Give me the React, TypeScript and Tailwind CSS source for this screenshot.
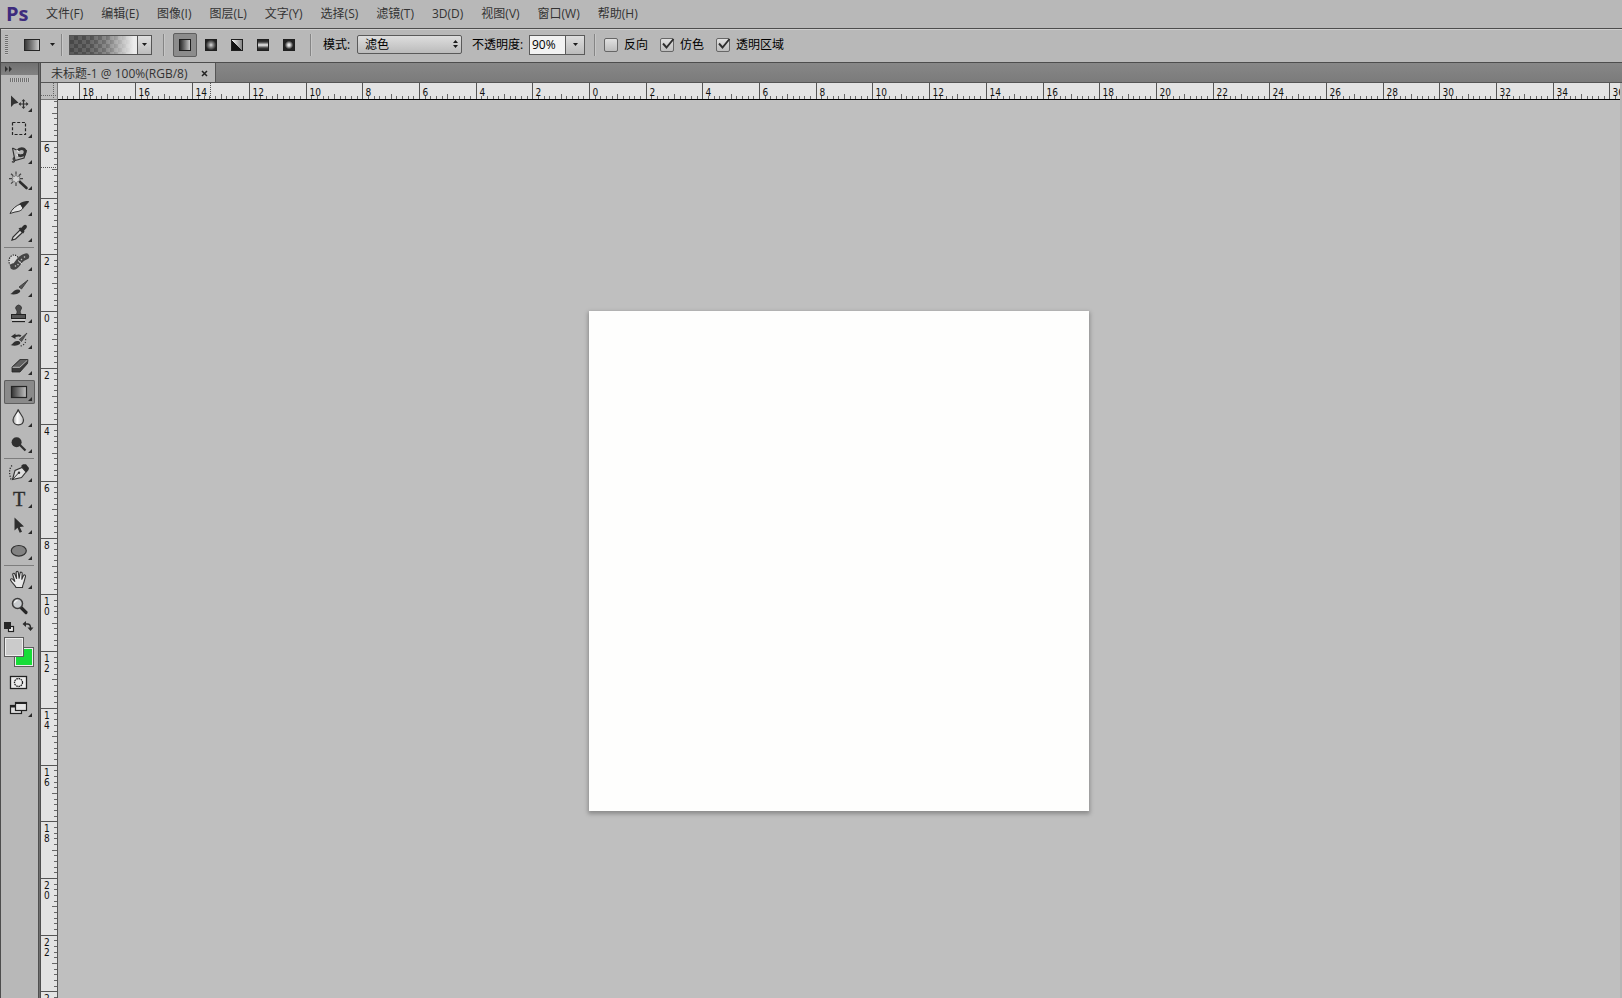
import React from "react";

const MENUS = [
  "文件(F)",
  "编辑(E)",
  "图像(I)",
  "图层(L)",
  "文字(Y)",
  "选择(S)",
  "滤镜(T)",
  "3D(D)",
  "视图(V)",
  "窗口(W)",
  "帮助(H)",
];

const UI_FONT = "font-['Open_Sans','Noto_Sans_CJK_SC',sans-serif]";
const DARK = "#333333";
const UNIT = 56.69;

/* ---------- tool icons, drawn on a 31x24 button ---------- */

const Corner = () => <path d="M28 17v4h-4z" fill="#2a2a2a" />;

const ICONS: Record<string, React.ReactNode> = {
  move: (
    <>
      <path d="M7 4.5V16l3-3 4.5-1.2z" fill={DARK} />
      <path d="M15.5 13h8M19.5 9v8" stroke={DARK} strokeWidth="1.2" />
      <path d="M19.5 8l1.9 2.3h-3.8zM19.5 18l1.9-2.3h-3.8zM14.5 13l2.3-1.9v3.8zM24.5 13l-2.3-1.9v3.8z" fill={DARK} />
    </>
  ),
  marquee: (
    <rect x="8.5" y="5.5" width="13" height="12" fill="none" stroke="#222" strokeWidth="1.2" strokeDasharray="3 1.7" />
  ),
  lasso: (
    <>
      <path d="M8.5 5l2.5 12.500L20 15l2.500-8" fill="none" stroke={DARK} strokeWidth="1.2" />
      <path d="M8.5 5l5 2.500M11 14.500c-2 0-2.500 1.500-1 3s-1 2-2 1" fill="none" stroke={DARK} strokeWidth="1.2" />
      <path d="M13.500 12l3 .8 3-.8c2-.9 2.500-5.500-.5-6.200-3-.6-4.500.7-5.500 2" fill="none" stroke={DARK} strokeWidth="2.800" />
      <path d="M12.500 7l2.500 2M12.800 11l1 2.500" stroke="#e5e5e5" strokeWidth="1.200" />
    </>
  ),
  wand: (
    <>
      <path d="M12 2.500v3M12 14v3M5 9.700h3M7 4.800l2.200 2M17 4.800l-2.200 2M7 14.600l2.200-2M16 9.700h3" stroke="#444" strokeWidth="1.200" />
      <path d="M12 5.500l1.300 2.300 2.600-.6-.6 2.500 1 2.300-2.500.3-1.800 2-1.500-2-2.600-.4 1-2.200-.6-2.500 2.500.4z" fill="#d2d2d2" stroke="#666" strokeWidth=".7" />
      <path d="M16 13l6.500 6" stroke="#2c2c2c" strokeWidth="2.600" strokeLinecap="round" />
    </>
  ),
  slice: (
    <>
      <path d="M6 18.500C8 14 12 10.500 16.500 9l2.500 4c-2 3.500-5.500 3.500-8 4z" fill="#e4e4e4" stroke="#333" strokeWidth="1" />
      <path d="M15.500 8.500c3-2 6-2.500 9.500-2.500l-.5 1.500-5.500 6z" fill="#303030" />
    </>
  ),
  eyedropper: (
    <>
      <path d="M8 19l1-3 7-7 2.500 2.500-7 6.500z" fill="#d8d8d8" stroke="#303030" strokeWidth="1.200" />
      <path d="M14.500 7.500l2-1 .6.500 2.400-2.600c2-1.700 4.500.4 3 2.600L20 9.700l.5.800-1.300 2z" fill="#2c2c2c" />
    </>
  ),
  healing: (
    <>
      <ellipse cx="10" cy="11" rx="5" ry="6" fill="#d5d5d5" stroke="#222" strokeWidth="1.200" strokeDasharray="1.200 1.200" />
      <path d="M9.500 16.500c4 .5 4.500-8 12.500-10" stroke="#454545" strokeWidth="6.400" strokeLinecap="round" fill="none" />
      <path d="M14 10.500l4 3.500" stroke="#ddd" strokeWidth="1" />
      <path d="M15.500 11.500l1 1M17 9l1 1M20 6.500l1 1M11 15.500l1 1M13.500 14l1 1" stroke="#bbb" strokeWidth="1.200" />
    </>
  ),
  brush: (
    <>
      <path d="M24 4l-6.500 9-2.500-2z" fill="#555" stroke="#333" strokeWidth=".8" />
      <path d="M6 18c3-.5 3.500-4.500 7.500-4.500 2.500 0 3.500 1.500 2 3-2 2-6 2.500-9.500 1.500z" fill="#303030" />
    </>
  ),
  stamp: (
    <>
      <path d="M12.500 8a2.900 2.900 0 1 1 4.200 0c-1 1.500-.4 3 .8 4.500H12c1.200-1.500 1.500-3 .5-4.500z" fill="#4a4a4a" stroke="#2b2b2b" strokeWidth=".7" />
      <rect x="7.500" y="12.500" width="14" height="4" fill="#555" stroke="#222" />
      <path d="M8 19.500h13" stroke="#222" strokeWidth="1.300" />
      <path d="M8 18h13" stroke="#eee" strokeWidth="1" />
    </>
  ),
  history: (
    <>
      <path d="M23 5l-5.500 8.500-2.200-2z" fill="#555" stroke="#333" strokeWidth=".7" />
      <path d="M6.500 17c2.500-.5 3-4 6.500-4s4 2 2.500 3.300c-2 1.700-6 1.700-9 .7z" fill="#303030" />
      <path d="M7 8.500l4.500-3V7c3-1 4.500-.6 6 .5l-1.500 1.500c-1.500-.8-2.500-.5-4.500 0V11z" fill="#303030" />
      <path d="M21.500 11c.8 3.500-1.500 6.800-6.500 7.300" stroke="#333" strokeWidth="1.200" strokeDasharray="1.200 1.600" fill="none" />
    </>
  ),
  eraser: (
    <>
      <path d="M8 13l8-7.500h8L23.500 9.500l-7.500 8.500H8z" fill="#3a3a3a" stroke="#252525" strokeWidth=".8" />
      <path d="M8.500 13.200L16.300 6h6.900l-7.200 7.200z" fill="#606060" />
      <path d="M8.500 13.300h7.300l7.500-7" stroke="#c8c8c8" strokeWidth=".9" fill="none" />
    </>
  ),
  gradient: (
    <rect x="7.500" y="6.500" width="15" height="11" fill="url(#tool-gradient)" stroke="#252525" strokeWidth="1.200" />
  ),
  blur: (
    <path d="M14.200 3.500c1 4 5.300 6.500 5.300 10.500 0 3-2.300 4.800-5.200 4.800S9 17 9 14c0-4 4.200-6.500 5.200-10.500z" fill="url(#drop)" stroke="#383838" strokeWidth="1.200" />
  ),
  dodge: (
    <>
      <path d="M15.500 12.500l6 6" stroke="#303030" strokeWidth="2.200" />
      <circle cx="12.600" cy="10.200" r="5" fill="#303030" />
    </>
  ),
  pen: (
    <>
      <path d="M8 4.500c-3 3-3 8-1 14" stroke="#222" strokeWidth="1.200" strokeDasharray="1.200 1.500" fill="none" />
      <path d="M8.500 18.500l2.500-9 7-3 4 4.500-4.500 5.500z" fill="#dedede" stroke="#333" strokeWidth="1.100" />
      <path d="M8.500 18.500l6-6.500" stroke="#333" strokeWidth="1" />
      <circle cx="15" cy="11.800" r="1.200" fill="#333" />
      <path d="M17 5l2-1.800h3L25 7l-.5 2-2 2.500z" fill="#2c2c2c" />
    </>
  ),
  type: (
    <text x="15" y="19" textAnchor="middle" fontSize="20" fill="#2e2e2e" stroke="#2e2e2e" strokeWidth=".4" className="font-['Liberation_Serif',serif]">
      T
    </text>
  ),
  path: <path d="M10.500 4.500v13l3-2.800 2.200 5 2.300-1-2.200-4.800 4.200-.4z" fill="#2e2e2e" />,
  ellipse: <ellipse cx="14.800" cy="11.800" rx="7.500" ry="5.300" fill="#828282" stroke="#303030" strokeWidth="1.200" />,
  hand: (
    <path
      d="M12 19.500c-1-2.500-4-4.500-5.500-7.500 0-1.500 1.700-1.500 2.600-.5l1.700 1.800L8.700 6.500c0-1.600 1.800-1.600 2.200-.3l1.700 4.300-.5-6c.2-1.500 2-1.500 2.200 0l.8 5.800 1-5.300c.5-1.300 2.100-1 2.100.4l-.4 5.900 1.700-3.800c.8-1.200 2.200-.5 2 .8l-1.500 5.700c-.5 2-1.500 3-1.500 5.500z"
      fill="#e8e8e8"
      stroke="#333"
      strokeWidth="1.100"
      strokeLinejoin="round"
    />
  ),
  zoom: (
    <>
      <path d="M17 13.500l5 5" stroke="#262626" strokeWidth="3.200" strokeLinecap="round" />
      <circle cx="13.500" cy="9.500" r="5" fill="#c9cccf" stroke="#3c3c3c" strokeWidth="1.500" />
      <path d="M10.500 9c.3-1.800 1.500-2.600 3-2.700" stroke="#f3f3f3" strokeWidth="1.200" fill="none" />
    </>
  ),
  mask: (
    <>
      <rect x="6.500" y="6.500" width="16" height="12" fill="#eee" stroke="#222" strokeWidth="1.300" />
      <circle cx="14.500" cy="12.500" r="4" fill="#eee" stroke="#222" strokeWidth="1.300" strokeDasharray="1.600 .7" />
    </>
  ),
  screen: (
    <>
      <rect x="6.500" y="9.500" width="11" height="8" fill="#ddd" stroke="#222" strokeWidth="1.200" />
      <path d="M6 10.500h12" stroke="#222" strokeWidth="2" />
      <rect x="11.500" y="6.500" width="11" height="8" fill="#e4e4e4" stroke="#222" strokeWidth="1.200" />
      <path d="M11 7h12" stroke="#222" strokeWidth="2" />
    </>
  ),
};

type Tool = { id: string; label: string; flyout?: boolean; active?: boolean };

const GROUPS: Tool[][] = [
  [
    { id: "move", label: "移动工具", flyout: true },
    { id: "marquee", label: "矩形选框工具", flyout: true },
    { id: "lasso", label: "磁性套索工具", flyout: true },
    { id: "wand", label: "魔棒工具", flyout: true },
    { id: "slice", label: "切片工具", flyout: true },
    { id: "eyedropper", label: "吸管工具", flyout: true },
  ],
  [
    { id: "healing", label: "污点修复画笔工具", flyout: true },
    { id: "brush", label: "画笔工具", flyout: true },
    { id: "stamp", label: "仿制图章工具", flyout: true },
    { id: "history", label: "历史记录画笔工具", flyout: true },
    { id: "eraser", label: "橡皮擦工具", flyout: true },
    { id: "gradient", label: "渐变工具", flyout: true, active: true },
    { id: "blur", label: "模糊工具", flyout: true },
    { id: "dodge", label: "减淡工具", flyout: true },
  ],
  [
    { id: "pen", label: "钢笔工具", flyout: true },
    { id: "type", label: "横排文字工具", flyout: true },
    { id: "path", label: "路径选择工具", flyout: true },
    { id: "ellipse", label: "椭圆工具", flyout: true },
  ],
  [
    { id: "hand", label: "抓手工具", flyout: true },
    { id: "zoom", label: "缩放工具" },
  ],
];

function ToolButton({ tool }: { tool: Tool }) {
  return (
    <button
      type="button"
      aria-label={tool.label}
      className={
        tool.active
          ? "my-px block h-6 w-[31px] rounded-xs bg-[#8a8a8a] shadow-[inset_0_0_0_1px_#5e5e5e]"
          : "my-px block h-6 w-[31px]"
      }
    >
      <svg viewBox="0 0 31 24" className="block h-6 w-[31px]">
        {ICONS[tool.id]}
        {tool.flyout && <Corner />}
      </svg>
    </button>
  );
}

function Toolbar() {
  return (
    <aside className="flex w-[38px] shrink-0 flex-col border-l border-[#4d4d4d] bg-[#b8b8b8]">
      <svg className="absolute h-0 w-0">
        <defs>
          <linearGradient id="tool-gradient">
            <stop offset="0" stopColor="#333" />
            <stop offset="1" stopColor="#c4c4c4" />
          </linearGradient>
          <linearGradient id="drop">
            <stop offset="0" stopColor="#999" />
            <stop offset=".4" stopColor="#fff" />
            <stop offset="1" stopColor="#bbb" />
          </linearGradient>
        </defs>
      </svg>
      <button
        type="button"
        aria-label="展开面板"
        className="flex h-3 w-full items-center bg-linear-to-b from-[#707070] to-[#828282] pl-1"
      >
        <svg viewBox="0 0 8 6" className="h-1.5 w-2">
          <path d="M0 0l3 3-3 3zM4 0l3 3-3 3z" fill="#2e2e2e" />
        </svg>
      </button>
      <div className="mt-[3px] mb-2 ml-[9px] h-1 w-5 bg-[repeating-linear-gradient(90deg,#6f6f6f_0_1px,#c4c4c4_1px_2px)]" />
      <div className="flex flex-col pl-[3px]">
        {GROUPS.map((group, i) => (
          <div key={group[0].id} className="flex flex-col">
            {i > 0 && <hr className="my-px w-[30px] border-t border-[#7d7d7d]" />}
            {group.map((t) => (
              <ToolButton key={t.id} tool={t} />
            ))}
          </div>
        ))}
        <div className="flex h-4 justify-between pr-1">
          <button type="button" aria-label="默认前景色和背景色">
            <svg viewBox="0 0 12 16" className="h-4 w-3">
              <rect x="4.500" y="7.500" width="5" height="5" fill="#eee" stroke="#222" strokeWidth="1.200" />
              <rect x="0" y="3" width="7" height="7" fill="#262626" />
            </svg>
          </button>
          <button type="button" aria-label="切换前景色和背景色">
            <svg viewBox="0 0 12 16" className="h-4 w-3">
              <path d="M3 5h2.500c2.500 0 3 1.500 3 4" stroke="#2b2b2b" strokeWidth="1.500" fill="none" />
              <path d="M4 2v6L.5 5zM5.500 8.500h6L8.500 12z" fill="#2b2b2b" />
            </svg>
          </button>
        </div>
        <div className="relative my-0.5 h-[30px] w-[30px]">
          <button
            type="button"
            aria-label="背景色"
            className="absolute right-0 bottom-0 h-5 w-5 border border-[#5c5c5c] bg-[#17dd38] shadow-[inset_0_0_0_1px_#eeeeee]"
          />
          <button
            type="button"
            aria-label="前景色"
            className="absolute top-0 left-0 h-5 w-5 border border-[#5c5c5c] bg-[#cbcbcb] shadow-[inset_0_0_0_1px_#eeeeee]"
          />
        </div>
        <ToolButton tool={{ id: "mask", label: "以快速蒙版模式编辑" }} />
        <ToolButton tool={{ id: "screen", label: "更改屏幕模式", flyout: true }} />
      </div>
    </aside>
  );
}

/* ---------- rulers ---------- */

function HorizontalRuler() {
  const half = 1500;
  const zero = half - 250;
  const ticks: React.ReactNode[] = [];
  for (let i = -220; i <= 300; i++) {
    const x = Math.round(zero + (i * UNIT) / 10) + 0.5;
    const len = i % 10 === 0 ? 16 : i % 5 === 0 ? 5 : 3;
    ticks.push(<path key={i} d={`M${x} 16v-${len}`} stroke={len === 16 ? "#555" : "#666"} />);
    if (i % 10 === 0 && i >= -90 && i <= 180) {
      ticks.push(
        <text key={`t${i}`} x={x + 3} y="13" fontSize="10" fill="#111">
          {Math.abs(i / 5)}
        </text>,
      );
    }
  }
  return (
    <div className="flex h-[17px] min-w-0 flex-1 justify-center overflow-hidden border-b border-black bg-[#e3e3e3]">
      <svg width="3000" height="16" className="shrink-0 font-['DejaVu_Sans_Condensed','DejaVu_Sans',sans-serif]">
        {ticks}
        <path d="M871.500 0v16" stroke="#555" strokeDasharray="1 1" />
      </svg>
    </div>
  );
}

function VerticalRuler() {
  const zero = 211;
  const ticks: React.ReactNode[] = [];
  for (let i = -37; i <= 300; i++) {
    const y = Math.round(zero + (i * UNIT) / 10) + 0.5;
    const len = i % 10 === 0 ? 16 : i % 5 === 0 ? 5 : 3;
    ticks.push(<path key={i} d={`M16 ${y}h-${len}`} stroke={len === 16 ? "#555" : "#666"} />);
    if (i % 10 === 0 && i <= 120) {
      String(Math.abs(i / 5))
        .split("")
        .slice(0, i === 120 ? 1 : 2)
        .forEach((digit, k) =>
          ticks.push(
            <text key={`t${i}-${k}`} x="3" y={y + 10.5 + k * 10} fontSize="10" fill="#111">
              {digit}
            </text>,
          ),
        );
    }
  }
  return (
    <div className="w-[17px] shrink-0 overflow-hidden border-r border-[#555] bg-[#e3e3e3]">
      <svg width="16" height="1900" className="block font-['DejaVu_Sans_Condensed','DejaVu_Sans',sans-serif]">
        {ticks}
        <path d="M0 67.500h16" stroke="#555" strokeDasharray="1 1" />
      </svg>
    </div>
  );
}

/* ---------- options bar ---------- */

const Divider = () => <div className="h-[22px] w-px shrink-0 bg-[#858585] shadow-[1px_0_0_#c6c6c6]" />;

const Caret = () => (
  <svg viewBox="0 0 5 3" className="h-[3px] w-[5px]">
    <path d="M0 0h5L2.500 3z" fill="#1c1c1c" />
  </svg>
);

const STYLES = [
  { label: "线性渐变", fill: "bg-linear-to-r from-[#2d2d2d] to-[#cccccc]" },
  { label: "径向渐变", fill: "bg-[radial-gradient(circle,#dddddd_0,#8a8a8a_30%,#222222_75%)]" },
  {
    label: "角度渐变",
    fill: "bg-[linear-gradient(45deg,#111111_50%,transparent_50%),linear-gradient(to_right,#f4f4f4,#858585)]",
  },
  { label: "对称渐变", fill: "bg-[linear-gradient(180deg,#222222,#3a3a3a_20%,#eeeeee_50%,#3a3a3a_80%,#222222)]" },
  { label: "菱形渐变", fill: "bg-[radial-gradient(circle,#ffffff_0,#cccccc_20%,#222222_60%)]" },
];

function Check({ label, checked }: { label: string; checked?: boolean }) {
  return (
    <label className="flex items-center gap-1.5">
      <span className="relative h-3.5 w-3.5">
        <input
          type="checkbox"
          defaultChecked={checked}
          className="peer block h-3.5 w-3.5 appearance-none rounded-xs border border-[#666666] bg-linear-to-b from-[#e0e0e0] to-[#bdbdbd]"
        />
        <svg
          viewBox="0 0 16 14"
          className="pointer-events-none invisible absolute top-0 left-0 h-3.5 w-4 peer-checked:visible"
        >
          <path d="M3 5.500l3.500 4L13.500 1" stroke="#2e2e2e" strokeWidth="1.900" fill="none" />
        </svg>
      </span>
      {label}
    </label>
  );
}

function OptionsBar() {
  return (
    <div className="flex h-[34px] shrink-0 items-center border-b border-l border-[#4d4d4d] bg-[#b8b8b8] pb-0.5 text-xs text-black shadow-[inset_0_1px_0_#cfcfcf]">
      <div className="mr-4 ml-1 h-5 w-[3px] bg-[repeating-linear-gradient(180deg,#6f6f6f_0_1px,#c4c4c4_1px_2px)]" />
      <button type="button" aria-label="渐变工具预设" className="flex items-center gap-2.5">
        <span className="h-3 w-4 border border-[#262626] bg-linear-to-r from-[#3a3a3a] to-[#cccccc]" />
        <Caret />
      </button>
      <div className="ml-1.5">
        <Divider />
      </div>
      <button type="button" aria-label="渐变编辑器" className="ml-[7px] flex h-5 w-[83px] border border-[#555555]">
        <span className="h-full flex-1 bg-[linear-gradient(90deg,#44444499_0%,#55555588_30%,#9a9a9a88_55%,#ececec_95%),repeating-conic-gradient(#4c4c4c_0_25%,#7c7c7c_0_50%)] bg-[length:100%_100%,8px_8px]" />
        <span className="flex h-full w-3.5 items-center justify-center border-l border-[#555555] bg-linear-to-b from-[#e0e0e0] to-[#bcbcbc]">
          <Caret />
        </span>
      </button>
      <div className="ml-[11px]">
        <Divider />
      </div>
      <div className="ml-[9px] flex gap-0.5">
        {STYLES.map((s, i) => (
          <button
            key={s.label}
            type="button"
            aria-label={s.label}
            className={
              i === 0
                ? "flex h-6 w-6 items-center justify-center rounded-xs border border-[#5e5e5e] bg-[#8c8c8c]"
                : "flex h-6 w-6 items-center justify-center"
            }
          >
            <span className={`h-3 w-3 border border-[#1f1f1f] ${s.fill}`} />
          </button>
        ))}
      </div>
      <div className="ml-[9px]">
        <Divider />
      </div>
      <label htmlFor="blend" className="ml-3 w-[34px] whitespace-nowrap">
        模式:
      </label>
      <div className="relative">
        <select
          id="blend"
          className="block h-[19px] w-[105px] appearance-none rounded-xs border border-[#5a5a5a] bg-linear-to-b from-[#dedede] to-[#bbbbbb] pl-[7px] leading-4"
        >
          <option>滤色</option>
        </select>
        <svg viewBox="0 0 5 8" className="pointer-events-none absolute top-[5px] right-1 h-2 w-[5px]">
          <path d="M0 3h5L2.500 0zM0 5h5L2.500 8z" fill="#1c1c1c" />
        </svg>
      </div>
      <label htmlFor="opacity" className="ml-2.5 w-[57px] whitespace-nowrap">
        不透明度:
      </label>
      <div className="flex h-5 w-14 border border-[#5a5a5a]">
        <input id="opacity" defaultValue="90%" className="h-full w-[35px] bg-[#f2f2f2] pl-0.5 text-xs" />
        <button
          type="button"
          aria-label="不透明度滑块"
          className="flex h-full flex-1 items-center justify-center border-l border-[#5a5a5a] bg-linear-to-b from-[#dedede] to-[#bbbbbb]"
        >
          <Caret />
        </button>
      </div>
      <div className="ml-[9px]">
        <Divider />
      </div>
      <div className="ml-[9px] flex gap-3">
        <Check label="反向" />
        <Check label="仿色" checked />
        <Check label="透明区域" checked />
      </div>
    </div>
  );
}

export default function App() {
  return (
    <div className={`flex h-screen flex-col overflow-hidden bg-[#bfbfbf] ${UI_FONT}`}>
      <header className="flex h-[29px] shrink-0 items-center border-b border-[#4d4d4d] bg-[#b8b8b8] pl-1.5 text-xs text-[#333333]">
        <span className="w-10 text-xl leading-5 font-bold text-[#3d2b7d]">Ps</span>
        <nav className="flex gap-[18px]">
          {MENUS.map((m) => (
            <button key={m} type="button" className="whitespace-nowrap">
              {m}
            </button>
          ))}
        </nav>
      </header>
      <OptionsBar />
      <div className="flex min-h-0 flex-1">
        <Toolbar />
        <div className="w-[3px] shrink-0 border-x border-[#4f4f4f] bg-[#6e6e6e]" />
        <main className="flex min-w-0 flex-1 flex-col">
          <div className="flex h-5 shrink-0 border-b border-[#555555] bg-linear-to-b from-[#878787] to-[#7b7b7b]">
            <div className="flex items-center gap-3.5 border-r border-[#555555] bg-[#b8b8b8] pt-0.5 pr-[7px] pl-2.5 text-xs text-[#333333]">
              <span className="whitespace-nowrap">未标题-1 @ 100%(RGB/8)</span>
              <button type="button" aria-label="关闭">
                <svg viewBox="0 0 7 7" className="h-[7px] w-[7px]">
                  <path d="M1 1l5 5M6 1L1 6" stroke="#222" strokeWidth="1.500" />
                </svg>
              </button>
            </div>
          </div>
          <div className="flex min-h-0 flex-1">
            <div className="flex min-w-0 flex-1 flex-col">
              <div className="flex shrink-0">
                <svg viewBox="0 0 17 17" className="h-[17px] w-[17px] shrink-0 bg-[#bdbdbd]">
                  <path d="M0 12.500h17M12.500 0v17" stroke="#666" strokeDasharray="1 1" />
                  <path d="M16.500 0v17M0 16.500h17" stroke="#777" />
                </svg>
                <HorizontalRuler />
              </div>
              <div className="flex min-h-0 flex-1">
                <VerticalRuler />
                <div className="flex min-w-0 flex-1 justify-center overflow-hidden pt-[211px]">
                  <div className="h-[500px] w-[500px] shrink-0 bg-[#fefefd] shadow-[0_2px_4px_1px_#8c8c8c]" />
                </div>
              </div>
            </div>
            <div className="w-0.5 shrink-0 bg-[#b5b5b5]" />
          </div>
        </main>
      </div>
    </div>
  );
}
